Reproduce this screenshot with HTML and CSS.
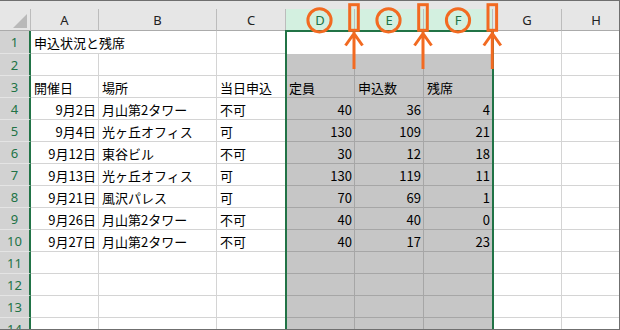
FILE: index.html
```html
<!DOCTYPE html>
<html lang="ja">

<head>
    <meta charset="UTF-8">
    <title>申込状況と残席</title>
    <link rel="stylesheet" href="styles.css">
</head>

<body>
    <div class="frame">
        <div class="strip"></div>
        <div class="sheet">
            <div class="corner"><svg width="14" height="14"><polygon points="14,0 14,14 0,14" fill="#b9b9b9"/></svg></div>
            <div class="ch">A</div>
            <div class="ch">B</div>
            <div class="ch">C</div>
            <div class="ch on">D</div>
            <div class="ch on">E</div>
            <div class="ch on">F</div>
            <div class="ch">G</div>
            <div class="ch">H</div>

            <div class="rh">1</div>
            <div class="wide">申込状況と残席</div>
            <div></div>
            <div class="act"></div>
            <div></div>
            <div></div>

            <div class="rh">2</div>
            <div></div><div></div><div></div>
            <div class="sel"></div><div class="sel"></div><div class="sel"></div>
            <div></div><div></div>

            <div class="rh">3</div>
            <div>開催日</div><div>場所</div><div>当日申込</div>
            <div class="sel">定員</div><div class="sel">申込数</div><div class="sel">残席</div>
            <div></div><div></div>

            <div class="rh">4</div>
            <div class="r">9月2日</div><div>月山第2タワー</div><div>不可</div>
            <div class="sel r">40</div><div class="sel r">36</div><div class="sel r">4</div>
            <div></div><div></div>

            <div class="rh">5</div>
            <div class="r">9月4日</div><div>光ヶ丘オフィス</div><div>可</div>
            <div class="sel r">130</div><div class="sel r">109</div><div class="sel r">21</div>
            <div></div><div></div>

            <div class="rh">6</div>
            <div class="r">9月12日</div><div>東谷ビル</div><div>不可</div>
            <div class="sel r">30</div><div class="sel r">12</div><div class="sel r">18</div>
            <div></div><div></div>

            <div class="rh">7</div>
            <div class="r">9月13日</div><div>光ヶ丘オフィス</div><div>可</div>
            <div class="sel r">130</div><div class="sel r">119</div><div class="sel r">11</div>
            <div></div><div></div>

            <div class="rh">8</div>
            <div class="r">9月21日</div><div>風沢パレス</div><div>可</div>
            <div class="sel r">70</div><div class="sel r">69</div><div class="sel r">1</div>
            <div></div><div></div>

            <div class="rh">9</div>
            <div class="r">9月26日</div><div>月山第2タワー</div><div>不可</div>
            <div class="sel r">40</div><div class="sel r">40</div><div class="sel r">0</div>
            <div></div><div></div>

            <div class="rh">10</div>
            <div class="r">9月27日</div><div>月山第2タワー</div><div>不可</div>
            <div class="sel r">40</div><div class="sel r">17</div><div class="sel r">23</div>
            <div></div><div></div>

            <div class="rh">11</div>
            <div></div><div></div><div></div>
            <div class="sel"></div><div class="sel"></div><div class="sel"></div>
            <div></div><div></div>

            <div class="rh">12</div>
            <div></div><div></div><div></div>
            <div class="sel"></div><div class="sel"></div><div class="sel"></div>
            <div></div><div></div>

            <div class="rh">13</div>
            <div></div><div></div><div></div>
            <div class="sel"></div><div class="sel"></div><div class="sel"></div>
            <div></div><div></div>

            <div class="rh">14</div>
            <div></div><div></div><div></div>
            <div class="sel"></div><div class="sel"></div><div class="sel"></div>
            <div></div><div></div>
        </div>

        <div class="selbox"></div>

        <svg class="marks" width="620" height="330">
            <g fill="none" stroke="#f26a21" stroke-width="3">
                <circle cx="319.5" cy="20.3" r="11.6"/>
                <circle cx="388.5" cy="20.3" r="11.6"/>
                <circle cx="458" cy="20.3" r="11.6"/>
                <rect x="349.7" y="4.7" width="8.6" height="25.6"/>
                <rect x="418.7" y="4.7" width="8.6" height="25.6"/>
                <rect x="488" y="4.7" width="8.6" height="25.6"/>
                <path d="M354 32V69M345.5 45.5L354 33.5L362.5 45.5"/>
                <path d="M423 32V69M414.5 45.5L423 33.5L431.5 45.5"/>
                <path d="M492.3 32V69M483.8 45.5L492.3 33.5L500.8 45.5"/>
            </g>
        </svg>
    </div>
</body>

</html>
```

FILE: styles.css
```css
body {
    margin: 0;
    background-color: #fff;
}

.frame {
    position: relative;
    width: 620px;
    height: 330px;
    overflow: hidden;
    box-sizing: border-box;
    border-top: 1px solid #6f6f6f;
    border-right: 1px solid #6f6f6f;
    border-bottom: 1px solid #6f6f6f;
    background-color: #fff;
}

.strip {
    height: 8px;
    background-color: #e6e6e6;
}

.sheet {
    display: grid;
    grid-template-columns: 31px 68px 118px 69px 69px 69px 69px 69px 69px;
    grid-template-rows: 22px 23px;
    grid-auto-rows: 22px;
    font-family: "Noto Sans CJK JP", sans-serif;
    font-size: 13px;
    color: #000;
}

.sheet > div {
    box-sizing: border-box;
    display: flex;
    align-items: center;
    padding: 1px 3px 0;
    border-right: 1px solid #d4d4d4;
    border-bottom: 1px solid #d4d4d4;
    white-space: nowrap;
    overflow: hidden;
}

.sheet > .r {
    justify-content: flex-end;
    padding-right: 2px;
}

.sheet > .corner {
    justify-content: flex-end;
    align-items: flex-end;
    padding: 0 3px 2px 0;
    background-color: #e6e6e6;
    border-right-color: #bcbcbc;
    border-bottom-color: #ababab;
}

.sheet > .ch {
    justify-content: center;
    padding: 0;
    background-color: #e6e6e6;
    border-right-color: #bcbcbc;
    border-bottom-color: #ababab;
    font-family: "Noto Sans", sans-serif;
    font-size: 13px;
    color: #222;
}

.sheet > .ch.on {
    background-color: #d3f0e0;
    color: #217346;
}

.sheet > .rh {
    justify-content: center;
    padding: 0;
    background-color: #d2d2d2;
    border-right: 2px solid #217346;
    border-bottom-color: #e4e4e4;
    font-family: "Noto Sans", sans-serif;
    font-size: 13px;
    color: #217346;
}

.sheet > .wide {
    grid-column: span 2;
}

.sheet > .act {
    grid-column: span 3;
    border-bottom: none;
}

.sheet > .sel {
    background-color: #c6c6c6;
    border-right-color: #a6a6a6;
    border-bottom-color: #a6a6a6;
}

.selbox {
    position: absolute;
    left: 285px;
    top: 29px;
    width: 209px;
    height: 320px;
    box-sizing: border-box;
    border: 2px solid #217346;
    border-bottom: none;
}

.marks {
    position: absolute;
    left: 0;
    top: -1px;
}
```
